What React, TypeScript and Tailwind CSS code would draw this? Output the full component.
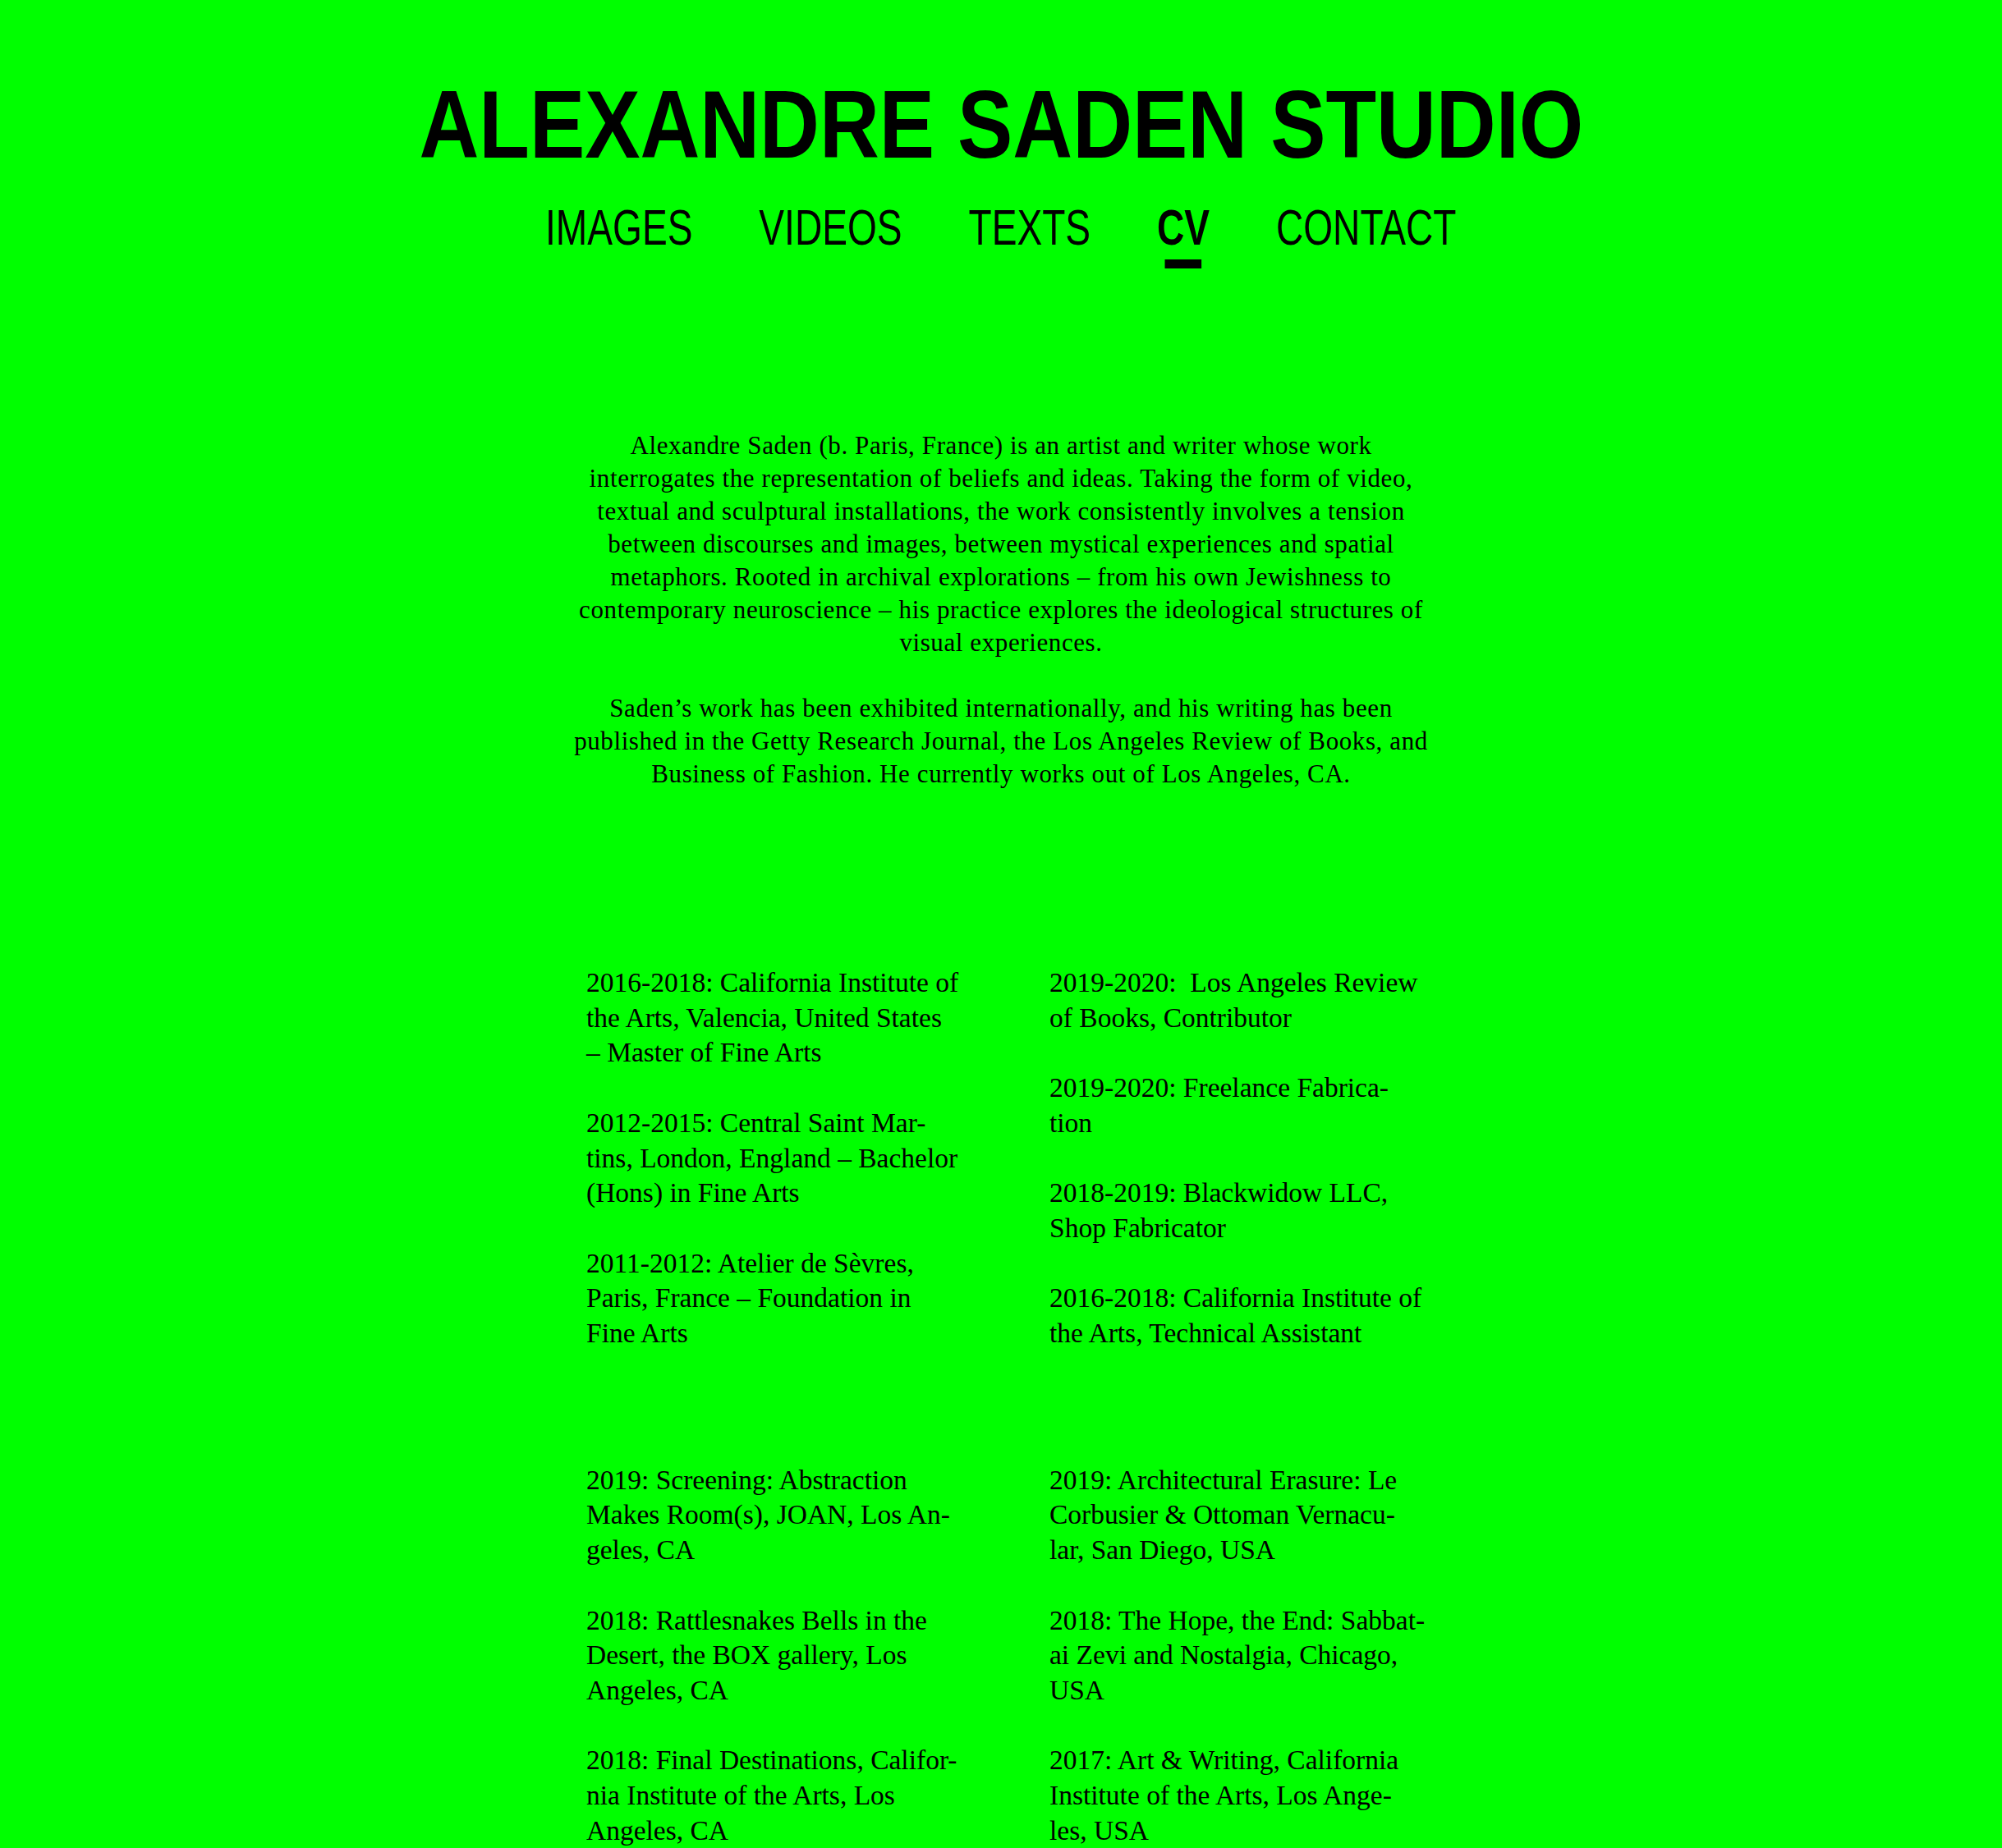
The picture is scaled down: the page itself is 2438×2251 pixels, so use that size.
import React from "react";

const edu: string[][] = [
  ["2016-2018: California Institute of", "the Arts, Valencia, United States", "– Master of Fine Arts"],
  ["2012-2015: Central Saint Mar-", "tins, London, England – Bachelor", "(Hons) in Fine Arts"],
  ["2011-2012: Atelier de Sèvres,", "Paris, France – Foundation in", "Fine Arts"],
];

const work: string[][] = [
  ["2019-2020:  Los Angeles Review", "of Books, Contributor"],
  ["2019-2020: Freelance Fabrica-", "tion"],
  ["2018-2019: Blackwidow LLC,", "Shop Fabricator"],
  ["2016-2018: California Institute of", "the Arts, Technical Assistant"],
];

const shows: string[][] = [
  ["2019: Screening: Abstraction", "Makes Room(s), JOAN, Los An-", "geles, CA"],
  ["2018: Rattlesnakes Bells in the", "Desert, the BOX gallery, Los", "Angeles, CA"],
  ["2018: Final Destinations, Califor-", "nia Institute of the Arts, Los", "Angeles, CA"],
];

const talks: string[][] = [
  ["2019: Architectural Erasure: Le", "Corbusier & Ottoman Vernacu-", "lar, San Diego, USA"],
  ["2018: The Hope, the End: Sabbat-", "ai Zevi and Nostalgia, Chicago,", "USA"],
  ["2017: Art & Writing, California", "Institute of the Arts, Los Ange-", "les, USA"],
];

function Column({ entries }: { entries: string[][] }) {
  return (
    <div className="flex flex-col gap-y-[42.7px]">
      {entries.map((lines, i) => (
        <div key={i}>
          {lines.map((l, j) => (
            <div key={j} className="whitespace-pre">
              {l}
            </div>
          ))}
        </div>
      ))}
    </div>
  );
}

function Section({ left, right, className }: { left: string[][]; right: string[][]; className: string }) {
  return (
    <div className={"mx-auto w-fit pl-[24px] " + className}>
      <div className="grid grid-cols-[470px_470px] gap-x-[94px] font-['Liberation_Serif',serif] text-[33.5px] leading-[42.7px] text-black">
        <Column entries={left} />
        <Column entries={right} />
      </div>
    </div>
  );
}

export default function App() {
  const navItems = ["IMAGES", "VIDEOS", "TEXTS", "CV", "CONTACT"];
  return (
    <div className="min-h-screen w-full bg-[#00ff00] text-black pt-[93px] pb-[120px] overflow-hidden">
      <header className="flex flex-col items-center">
        <h1 className="text-center font-['Liberation_Sans',Arial,sans-serif] font-bold text-[117px] leading-none whitespace-nowrap">
          <span className="inline-block scale-x-[0.862]">ALEXANDRE SADEN STUDIO</span>
        </h1>
        <nav className="mt-[37px] flex items-start justify-center gap-x-[107px] scale-x-[0.756] font-['Liberation_Sans',Arial,sans-serif] text-[61px] leading-none whitespace-nowrap">
          {navItems.map((item) =>
            item === "CV" ? (
              <div key={item} className="flex flex-col items-center">
                <span className="font-bold">CV</span>
                <span className="mt-[8px] block h-[11px] w-[59px] bg-black" />
              </div>
            ) : (
              <span key={item}>{item}</span>
            )
          )}
        </nav>
      </header>

      <section className="mt-[196px] mx-auto w-[1200px] text-center font-['Liberation_Serif',serif] text-[31px] tracking-[0.6px] leading-[40px] text-black">
        <p>
          Alexandre Saden (b. Paris, France) is an artist and writer whose work
          <br />
          interrogates the representation of beliefs and ideas. Taking the form of video,
          <br />
          textual and sculptural installations, the work consistently involves a tension
          <br />
          between discourses and images, between mystical experiences and spatial
          <br />
          metaphors. Rooted in archival explorations – from his own Jewishness to
          <br />
          contemporary neuroscience – his practice explores the ideological structures of
          <br />
          visual experiences.
        </p>
        <p className="mt-[40px]">
          Saden’s work has been exhibited internationally, and his writing has been
          <br />
          published in the Getty Research Journal, the Los Angeles Review of Books, and
          <br />
          Business of Fashion. He currently works out of Los Angeles, CA.
        </p>
      </section>

      <Section left={edu} right={work} className="mt-[213px]" />
      <Section left={shows} right={talks} className="mt-[136px]" />
    </div>
  );
}
